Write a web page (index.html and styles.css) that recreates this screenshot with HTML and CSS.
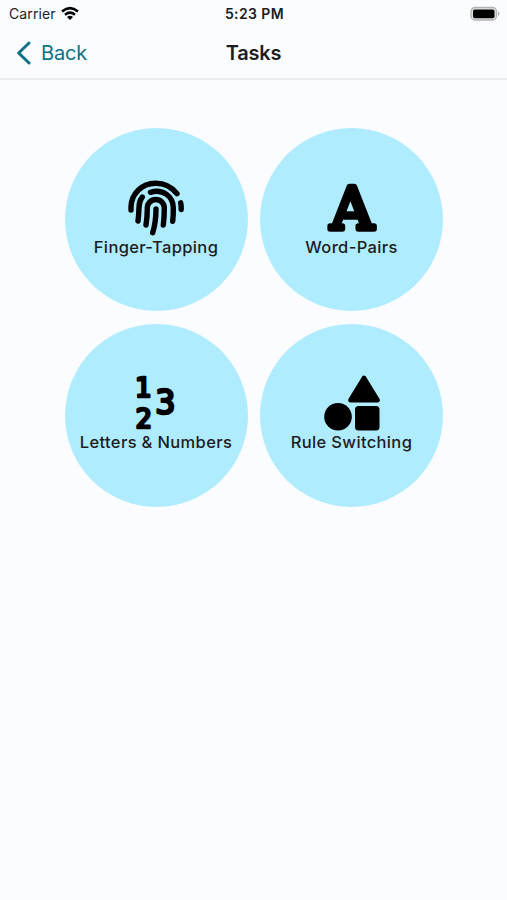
FILE: index.html
```html
<!DOCTYPE html>
<html lang="en">

<head>
    <meta charset="utf-8">
    <title>Tasks</title>
    <link rel="stylesheet" href="styles.css">
</head>

<body>
    <div class="status-bar">
        <div class="carrier">
            <span class="carrier-name">Carrier</span>
            <svg class="wifi" width="20" height="15" viewBox="0 0 20 15">
                <path d="M2 5.5Q10 -1.2 18 5.5M5 8.7Q10 4.5 15 8.7" fill="none" stroke="#000" stroke-width="2.5"/>
                <path d="M7 11Q10 8.5 13 11L10 14Z"/>
            </svg>
        </div>
        <div class="clock">5:23 PM</div>
        <svg class="battery" width="30" height="16" viewBox="0 0 30 16">
            <rect x="1" y="1.5" width="25.5" height="12.5" rx="4" fill="#e4e4e4" stroke="#b3b3b5" stroke-width="1.4"/>
            <rect x="3" y="3.5" width="21.5" height="8.7" rx="1.8"/>
            <path d="M28 5.2Q31 7.7 28 10.2Z" fill="#b3b3b5"/>
        </svg>
    </div>

    <div class="nav-bar">
        <a class="back">
            <svg width="16" height="24" viewBox="0 0 16 24">
                <path d="M14 2L3.7 12L14 22" fill="none" stroke="currentColor" stroke-width="3" stroke-linecap="round" stroke-linejoin="round"/>
            </svg>
            <span class="back-label">Back</span>
        </a>
        <div class="title">Tasks</div>
    </div>

    <div class="tasks">
        <div class="task">
            <svg class="icon" viewBox="0 0 56 56">
                <g class="lines">
                    <path d="M3 30V27.3A24.3 24.3 0 0 1 27.3 3.2A27 27 0 0 1 49 13.7"/>
                    <path d="M52.7 22.8Q53.4 26 53.2 29.5"/>
                    <path d="M14.3 17C9.5 23 11.8 28.5 10 41"/>
                    <path d="M22.5 12.3C35 8.5 45.3 16.5 45.3 28Q45.4 35 44.7 41.3"/>
                    <path d="M18 45Q19.3 37 19.3 28A8.5 8.5 0 0 1 36.3 28Q36.3 37 35.3 45"/>
                    <path d="M28 29Q28 42 24.7 52.7"/>
                </g>
            </svg>
            <span class="label">Finger-Tapping</span>
        </div>

        <div class="task">
            <svg class="icon" viewBox="0 0 56 56">
                <text class="letter" x="28" y="48.8" text-anchor="middle" textLength="43" lengthAdjust="spacingAndGlyphs">A</text>
            </svg>
            <span class="label">Word-Pairs</span>
        </div>

        <div class="task">
            <svg class="icon" viewBox="0 0 56 56">
                <text class="digit" x="6.8" y="21.7">1</text>
                <text class="digit" x="7.4" y="52.8">2</text>
                <text class="digit big" x="27.6" y="38.8">3</text>
            </svg>
            <span class="label">Letters &amp; Numbers</span>
        </div>

        <div class="task">
            <svg class="icon" viewBox="0 0 56 56">
                <path class="solid" d="M40 3.2L53.3 25H26.7Z"/>
                <circle cx="14" cy="41.7" r="13.8"/>
                <rect x="31" y="31" width="24.5" height="24.5" rx="3.5"/>
            </svg>
            <span class="label">Rule Switching</span>
        </div>
    </div>
</body>

</html>
```

FILE: styles.css
```css
body {
    font-family: Inter, "Liberation Sans", sans-serif;
    margin: 0;
    padding: 0;
    background: #fafcff;
    color: #1c1c1e;
}

.status-bar {
    display: grid;
    grid-template-columns: 1fr auto 1fr;
    align-items: center;
    height: 27px;
    padding: 0 7px 0 9px;
}

.carrier {
    display: flex;
    align-items: center;
    gap: 4px;
}

.carrier-name {
    font-size: 14px;
    letter-spacing: 0.1px;
}

.clock {
    font-size: 14px;
    font-weight: 600;
    letter-spacing: 0.4px;
}

.battery {
    justify-self: end;
}

.nav-bar {
    display: grid;
    grid-template-columns: 1fr auto 1fr;
    align-items: center;
    height: 51px;
    padding: 0 15px;
    border-bottom: 2px solid #ebedef;
}

.back {
    display: flex;
    align-items: center;
    gap: 10px;
    color: #0b7285;
}

.back-label {
    font-size: 20px;
    letter-spacing: -0.2px;
}

.title {
    font-size: 20px;
    font-weight: 600;
    letter-spacing: -0.2px;
}

.tasks {
    display: grid;
    grid-template-columns: 183px 183px;
    justify-content: center;
    gap: 12.5px;
    margin-top: 48px;
    padding-left: 0.5px;
}

.task {
    display: flex;
    flex-direction: column;
    align-items: center;
    box-sizing: border-box;
    height: 183px;
    padding-top: 51.5px;
    border-radius: 50%;
    background: #b0ecff;
}

.icon {
    width: 56px;
    height: 56px;
    overflow: visible;
}

.label {
    font-size: 16.5px;
    font-weight: 500;
    line-height: 23px;
    letter-spacing: 0.35px;
    white-space: nowrap;
}

.lines {
    fill: none;
    stroke: #000;
    stroke-width: 5.4;
    stroke-linecap: round;
}

.solid {
    stroke: #000;
    stroke-width: 5;
    stroke-linejoin: round;
}

.letter {
    font-family: "DejaVu Serif", serif;
    font-size: 58px;
    stroke: #000;
    stroke-width: 5.5;
    stroke-linejoin: round;
}

.digit {
    font-family: "DejaVu Sans Mono", monospace;
    font-size: 27px;
    stroke: #000;
    stroke-width: 2.6;
    stroke-linejoin: round;
}

.big {
    font-size: 33px;
}
```
